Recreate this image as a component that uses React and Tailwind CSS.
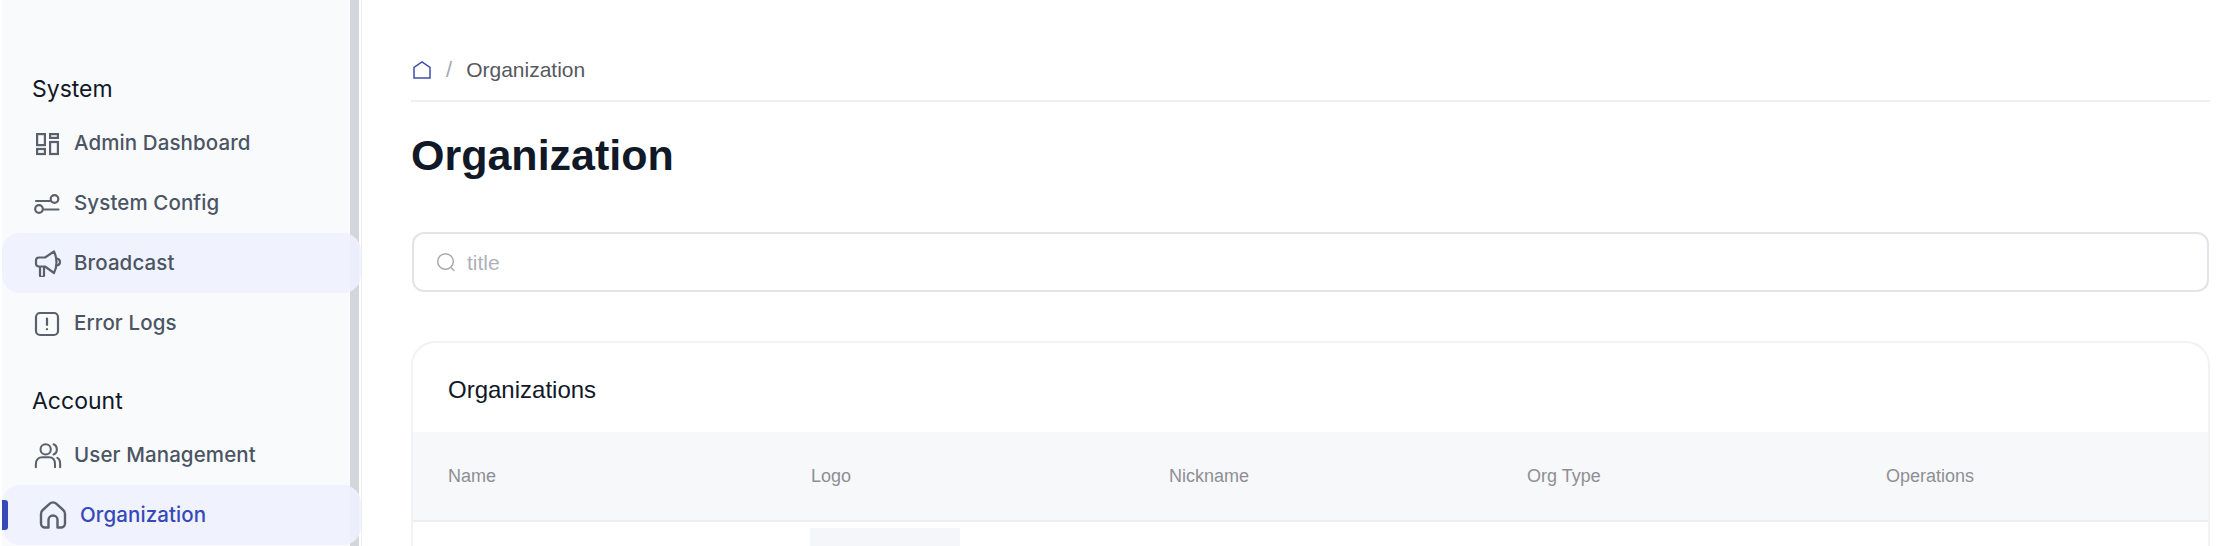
import React from "react";

const font = "[font-family:Inter,'Liberation_Sans',sans-serif]";
const mainFont = "[font-family:'Liberation_Sans',Arial,sans-serif]";

// Sidebar icons, all 28x28 and stroked in the current colour
function DashboardIcon() {
  return (
    <svg width="28" height="28" viewBox="0 0 28 28" fill="none" stroke="currentColor" strokeWidth="2.2">
      <rect x="3.100" y="5.100" width="7.800" height="11" />
      <rect x="16.100" y="5.100" width="7.800" height="3.800" />
      <rect x="3.100" y="20" width="7.800" height="5" />
      <rect x="16.100" y="13" width="7.800" height="12" />
    </svg>
  );
}

function ConfigIcon() {
  return (
    <svg width="28" height="28" viewBox="0 0 28 28" fill="none" stroke="currentColor" strokeWidth="2.2" strokeLinecap="round">
      <path d="M2 12h14" />
      <circle cx="20.500" cy="10" r="3.800" />
      <circle cx="5" cy="20" r="3.800" />
      <path d="M10 20.500h14.500" />
    </svg>
  );
}

function BroadcastIcon() {
  return (
    <svg width="28" height="28" viewBox="0 0 28 28" fill="none" stroke="currentColor" strokeWidth="2.2" strokeLinecap="round" strokeLinejoin="round">
      <g transform="translate(0 1)">
        <path d="M20 1.500 11 7.500H5a3 3 0 0 0-3 3v3a3 3 0 0 0 3 3h6l9 6.500c1.500-3 2.500-6.500 2.500-10.500S21.500 4.500 20 1.500Z" />
        <path d="M23 8.500c2 .5 3 1.800 3 3.500s-1 3-3 3.500" />
        <path d="M6 17v8a2 2 0 0 0 4 0v-8" />
      </g>
    </svg>
  );
}

function ErrorIcon() {
  return (
    <svg width="28" height="28" viewBox="0 0 28 28" fill="none" stroke="currentColor" strokeWidth="2.2" strokeLinecap="round">
      <rect x="2" y="4" width="22" height="22" rx="4" />
      <path d="M13 9.500v6.500" />
      <path d="M13 20v.2" />
    </svg>
  );
}

function UsersIcon() {
  return (
    <svg width="30" height="28" viewBox="0 0 30 28" fill="none" stroke="currentColor" strokeWidth="2.2" strokeLinecap="round">
      <circle cx="12.500" cy="8" r="5.500" />
      <path d="M21 2.500c2.500 1 3.500 3 3.500 5.500s-1 4.500-3.500 5.500" />
      <path d="M2 27v-3c0-5 3-7.500 7-7.500h7c4 0 6.500 2.500 6.500 7.500v3" />
      <path d="M25 17c2 1 3 3.500 3 6.500V27" />
    </svg>
  );
}

function OrgIcon() {
  return (
    <svg width="28" height="28" viewBox="0 0 28 28" fill="none" stroke="currentColor" strokeWidth="2.400" strokeLinecap="round" strokeLinejoin="round">
      <path d="M9.500 26.500H6a4 4 0 0 1-4-4V13c0-1.500.6-3 1.800-4l7-6.300a4.800 4.800 0 0 1 6.400 0l7 6.300c1.200 1 1.800 2.500 1.800 4v9.500a4 4 0 0 1-4 4h-3.500V19a4.500 4.500 0 0 0-9 0v7.500Z" />
    </svg>
  );
}

function NavItem({ icon, label, hovered, active }) {
  const bg = hovered || active ? "bg-[#eef1fe]/90 rounded-[18px]" : "";
  return (
    <div className={`relative flex items-center h-[60px] ${active ? "pl-[37px] gap-[13px]" : "pl-[32px] gap-[12px]"} ${bg}`}>
      {active && <span className="absolute left-0 top-[15px] h-[30px] w-[6px] rounded-r-[3px] bg-[#3549b9]" />}
      <span className="text-[#5b616c] flex items-center justify-center w-[28px] h-[28px]">{icon}</span>
      <span className={`text-[20.500px] font-medium tracking-[0.1px] ${active ? "text-[#3549b9]" : "text-[#4b5563]"}`}>{label}</span>
    </div>
  );
}

function Sidebar() {
  return (
    <aside className="relative w-[362px] h-full shrink-0 overflow-hidden border-r border-[#eceef1] bg-white">
      <div className="absolute left-[2px] top-0 bottom-0 w-[348px] bg-[#f9fafc]" />
      <div className="absolute left-[350px] top-0 bottom-0 w-[9px] bg-[#d4d6dc]" />
      <nav className="relative pl-[2px] pt-[70px]">
        <h3 className="pl-[30px] h-[38px] leading-[38px] text-[23px] text-[#111827]">System</h3>
        <div className="pt-[5px]">
          <NavItem icon={<DashboardIcon />} label="Admin Dashboard" />
          <NavItem icon={<ConfigIcon />} label="System Config" />
          <NavItem icon={<BroadcastIcon />} label="Broadcast" hovered />
          <NavItem icon={<ErrorIcon />} label="Error Logs" />
        </div>
        <h3 className="pl-[30px] mt-[29px] h-[38px] leading-[38px] text-[23px] text-[#111827]">Account</h3>
        <div className="pt-[5px]">
          <NavItem icon={<UsersIcon />} label="User Management" />
          <NavItem icon={<OrgIcon />} label="Organization" active />
        </div>
      </nav>
    </aside>
  );
}

const columns = [
  { name: "Name", width: "w-[363px]" },
  { name: "Logo", width: "w-[358px]" },
  { name: "Nickname", width: "w-[358px]" },
  { name: "Org Type", width: "w-[359px]" },
  { name: "Operations", width: "flex-1" },
];

export default function App() {
  return (
    <div className={`flex h-[546px] w-[2230px] overflow-hidden bg-white ${font}`}>
      <Sidebar />
      <main className={`flex-1 pl-[49px] pr-[20px] pt-[50px] ${mainFont}`}>
        <div className="flex items-center h-[52px] border-b-2 border-[#eeeff1] pb-[11px] pl-[2px]">
          <svg width="18" height="18" viewBox="0 0 18 18" fill="none" stroke="#3f4fa8" strokeWidth="1.500">
            <path d="M1 17V6.500L9 1l8 5.500V17Z" />
          </svg>
          <span className="ml-[15px] text-[22px] font-medium text-[#a9aaaf]">/</span>
          <span className="ml-[14px] text-[21px] text-[#57585f]">Organization</span>
        </div>
        <h1 className="mt-[27px] h-[52px] leading-[52px] text-[43px] font-bold text-[#111827]">Organization</h1>
        <div className="mt-[51px] ml-[1px] mr-[1px] flex items-center h-[60px] rounded-[12px] border-2 border-[#e3e4ea] pl-[22px]">
          <svg width="20" height="20" viewBox="0 0 20 20" fill="none" stroke="#a8a9b0" strokeWidth="1.500" strokeLinecap="round">
            <circle cx="9.500" cy="9.500" r="7.800" />
            <path d="m15.500 16 2.500 2.500" />
          </svg>
          <span className="ml-[11px] pt-[1px] text-[21px] text-[#b0b1b8]">title</span>
        </div>
        <section className="mt-[49px] rounded-t-[24px] border-x-2 border-t-2 border-[#f1f2f4] h-[300px]">
          <h2 className="pl-[35px] h-[89px] leading-[93px] text-[24px] text-[#111827]">Organizations</h2>
          <div className="flex items-center h-[90px] bg-[#f7f8fa] border-b-2 border-[#eceef0] pl-[35px] text-[18px] text-[#8e8f95]">
            {columns.map((col) => (
              <div key={col.name} className={col.width}>{col.name}</div>
            ))}
          </div>
          <div className="pl-[397px] pt-[6px]">
            <div className="h-[40px] w-[150px] bg-[#f5f6fa]" />
          </div>
        </section>
      </main>
    </div>
  );
}
